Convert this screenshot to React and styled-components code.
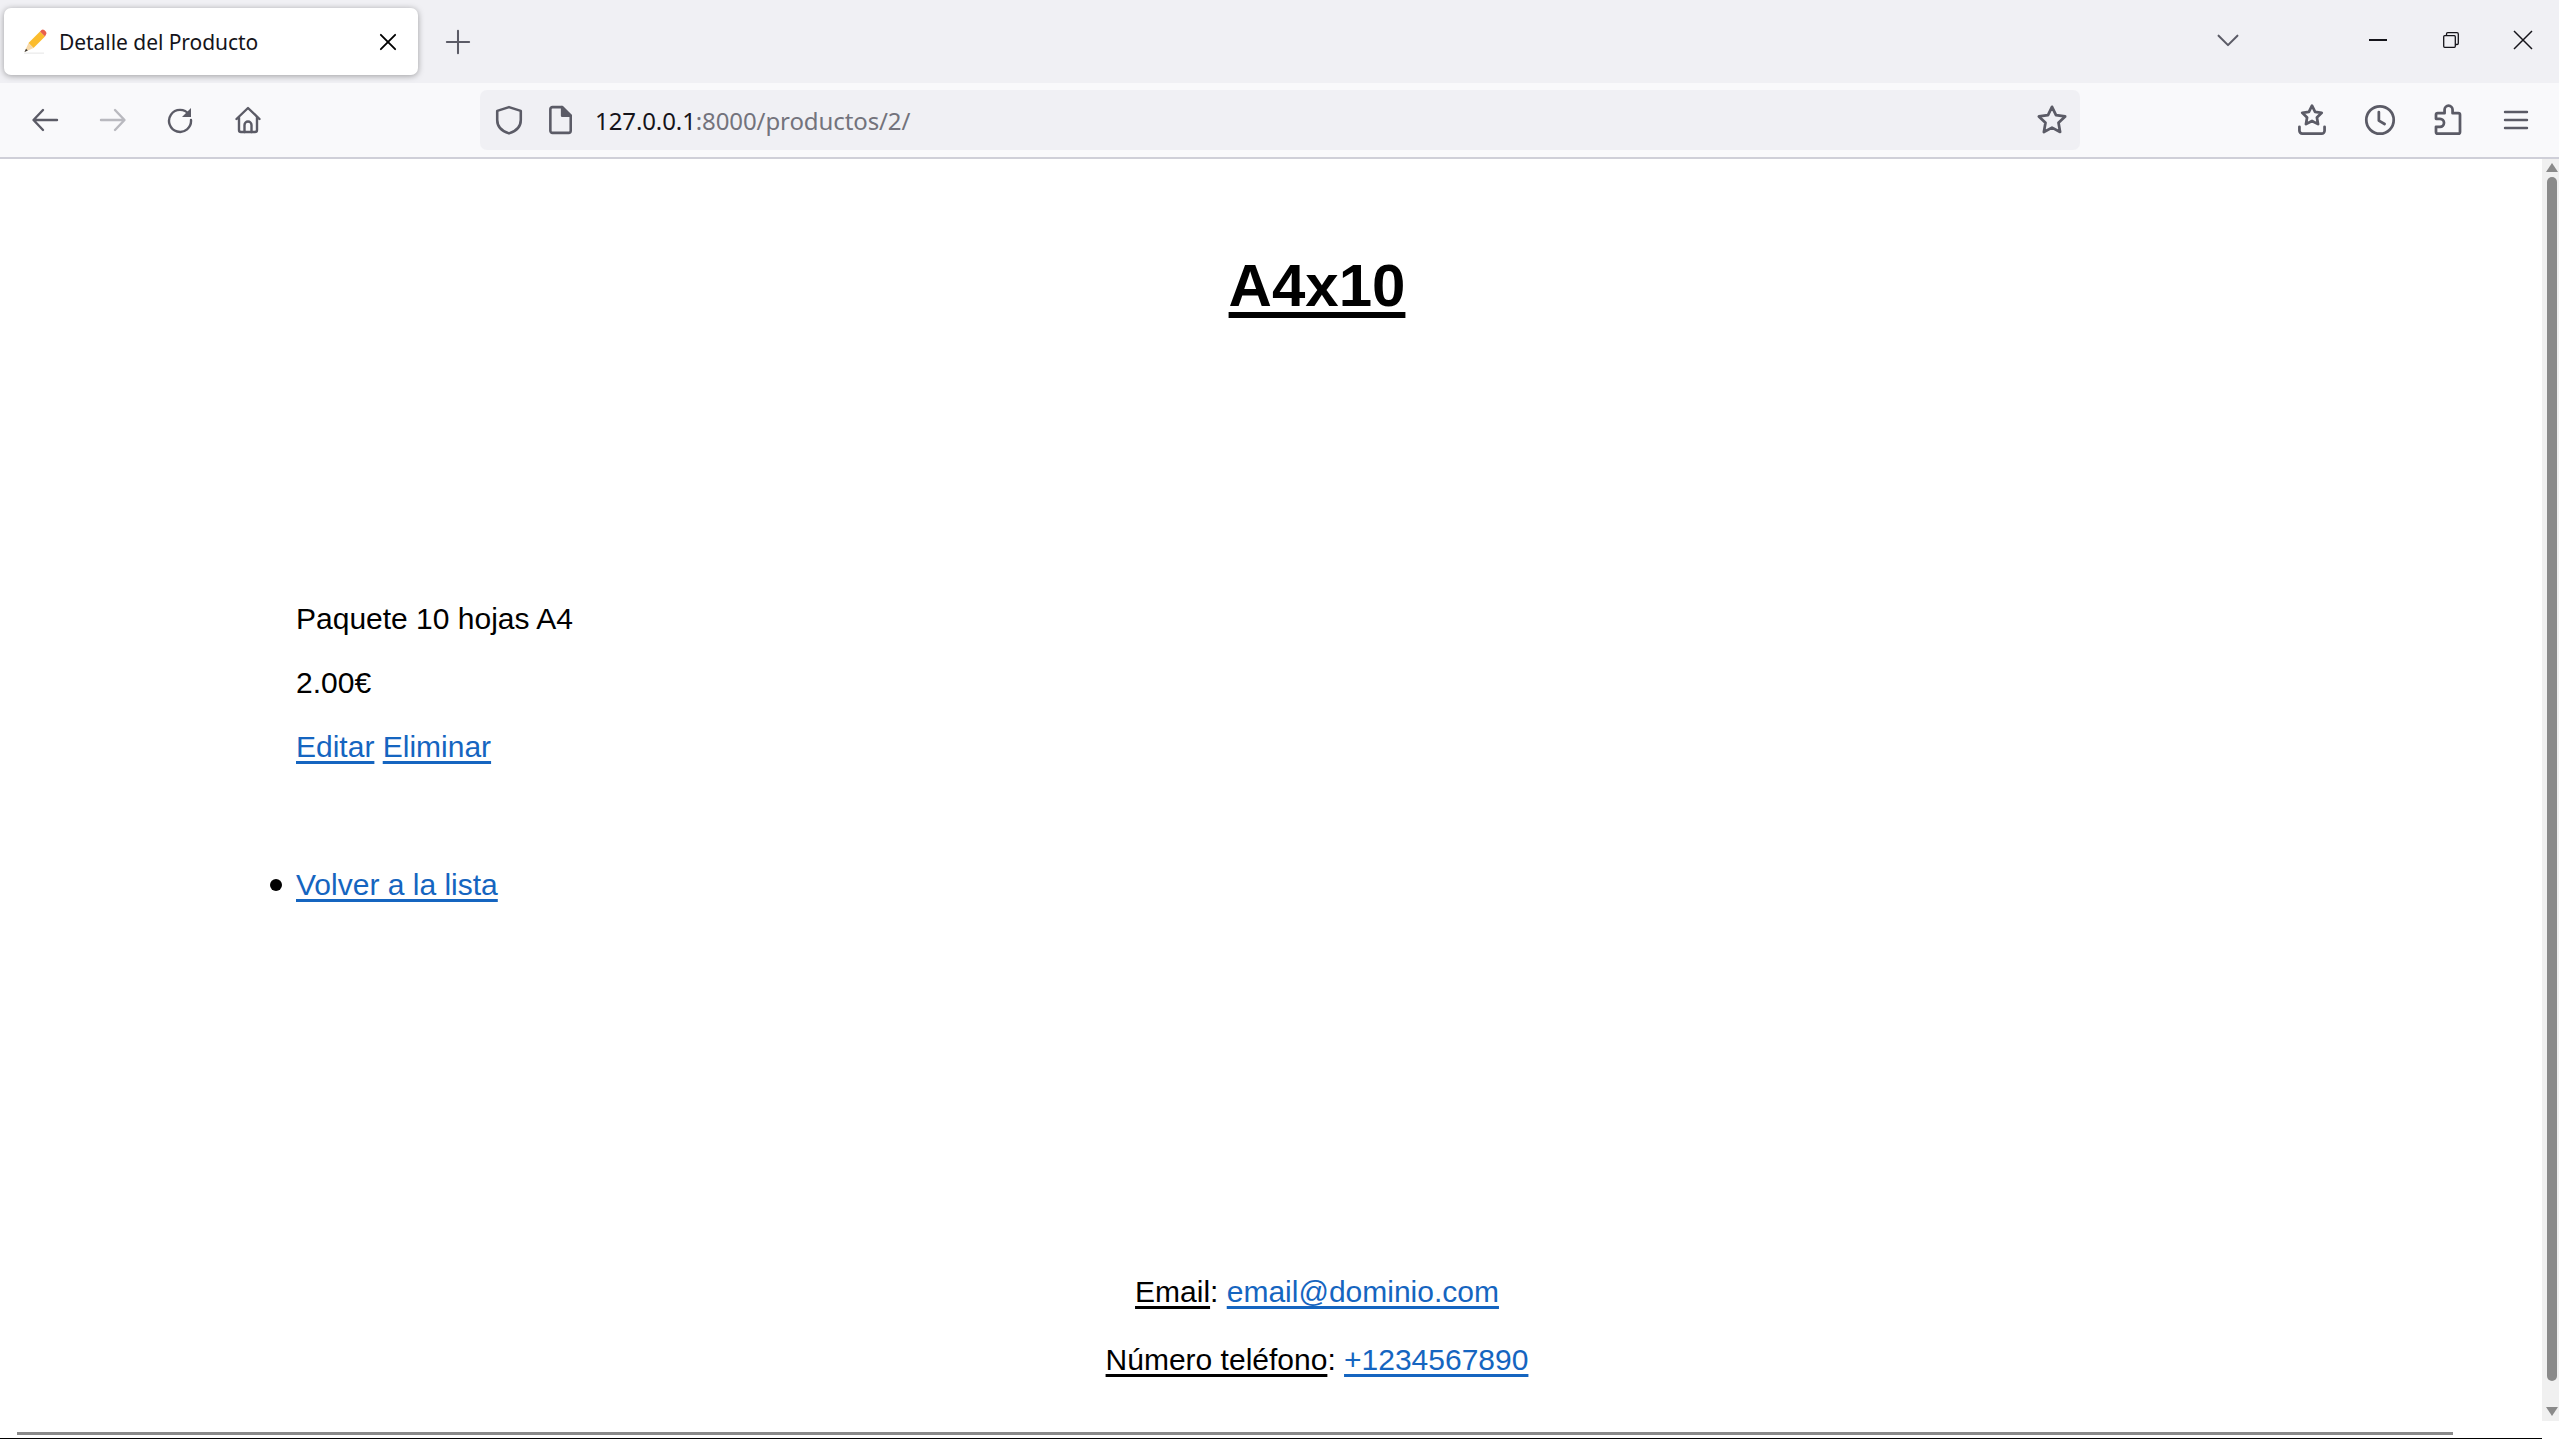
import styled, { createGlobalStyle } from 'styled-components';

const GlobalStyle = createGlobalStyle`
  html, body {
    margin: 0;
    padding: 0;
    height: 100%;
    overflow: hidden;
    background: #fff;
  }
`;

const Window = styled.div`
  width: 2559px;
  height: 1439px;
  display: flex;
  flex-direction: column;
  overflow: hidden;
  background: #fff;
`;

// Browser chrome
const TabBar = styled.div`
  height: 83px;
  flex: none;
  box-sizing: border-box;
  background: #f0f0f4;
  display: flex;
  align-items: flex-start;
  padding: 8px 0 0 4px;
`;

const Tab = styled.div`
  width: 414px;
  height: 67px;
  box-sizing: border-box;
  background: #fff;
  border-radius: 7px;
  box-shadow: 0 1px 6px rgba(0, 0, 0, 0.35);
  display: flex;
  align-items: center;
  padding: 0 20px 0 19px;
`;

const TabTitle = styled.span`
  flex: 1;
  margin-left: 12px;
  font-family: 'Noto Sans', sans-serif;
  font-size: 21px;
  letter-spacing: -0.05px;
  color: #15141a;
  white-space: nowrap;
`;

const NewTab = styled.div`
  margin: 21px 0 0 27px;
  width: 26px;
  height: 26px;
  color: #5b5b66;
`;

const TabSpacer = styled.div`
  flex: 1;
`;

const WindowControls = styled.div`
  display: flex;
  align-items: center;
  height: 63px;
  color: #15141a;
`;

const ControlSlot = styled.div`
  width: ${(p) => p.$w}px;
  flex: none;
  display: flex;
  justify-content: center;
  color: ${(p) => p.$color || '#15141a'};
`;

const Toolbar = styled.div`
  height: 76px;
  flex: none;
  box-sizing: border-box;
  background: #f9f9fb;
  border-bottom: 2px solid #cfcfd8;
  display: flex;
  align-items: center;
  padding: 0 0 1px 0;
`;

const NavGroup = styled.div`
  width: 480px;
  flex: none;
  display: flex;
  align-items: center;
  padding-left: 27px;
  box-sizing: border-box;
  gap: 31.5px;
`;

const ToolIcon = styled.div`
  width: 36px;
  height: 36px;
  display: flex;
  align-items: center;
  justify-content: center;
  color: ${(p) => (p.$dim ? '#b9b9bf' : '#5b5b66')};
`;

const UrlBar = styled.div`
  width: 1600px;
  height: 60px;
  flex: none;
  box-sizing: border-box;
  background: #f0f0f4;
  border-radius: 7px;
  display: flex;
  align-items: center;
  gap: 21px;
  padding: 0 12px 0 14px;
  color: #5b5b66;
`;

const UrlText = styled.div`
  flex: 1;
  margin: 2px 0 0 -1px;
  font-family: 'Noto Sans', sans-serif;
  font-size: 24px;
  letter-spacing: -0.1px;
  color: #73737c;
  white-space: nowrap;
`;

const UrlHost = styled.span`
  color: #15141a;
`;

const ActionGroup = styled.div`
  flex: 1;
  display: flex;
  align-items: center;
  justify-content: flex-end;
  gap: 32px;
  padding-right: 25px;
`;

// Page
const Viewport = styled.div`
  flex: 1;
  min-height: 0;
  display: flex;
`;

const Page = styled.main`
  flex: 1;
  min-width: 0;
  overflow: hidden;
  display: flex;
  flex-direction: column;
  font-family: 'Liberation Sans', Arial, sans-serif;
  font-size: 30px;
  line-height: 37px;
  color: #000;
`;

// the page content is wider than the viewport, so centred text sits right of the visible middle
const Title = styled.h1`
  width: 2634px;
  flex: none;
  margin: 90px 0 0;
  text-align: center;
  font-size: 60px;
  line-height: 74px;
  font-weight: 700;
  text-decoration: underline;
  text-decoration-thickness: 6px;
  text-underline-offset: 6px;
`;

const Details = styled.section`
  margin: 277px 0 0;
  padding-left: 296px;
`;

const Line = styled.p`
  margin: 0 0 27px;
`;

const PageLink = styled.a`
  color: #1565c0;
  text-decoration: underline;
  text-decoration-thickness: 3px;
  text-underline-offset: 4px;
`;

const BackList = styled.ul`
  margin: 74px 0 0;
  padding: 0 0 0 296px;
  list-style: none;
`;

const BackItem = styled.li`
  position: relative;

  &::before {
    content: '';
    position: absolute;
    left: -26px;
    top: 13px;
    width: 12px;
    height: 12px;
    border-radius: 50%;
    background: #000;
  }
`;

const Footer = styled.footer`
  width: 2634px;
  flex: none;
  margin-top: auto;
  padding-bottom: 54px;
  text-align: center;
`;

const FooterLine = styled.p`
  margin: 31px 0 0;
`;

const FooterLabel = styled.span`
  text-decoration: underline;
  text-decoration-thickness: 3px;
  text-underline-offset: 4px;
`;

const HScrollRow = styled.div`
  height: 6px;
  flex: none;
  padding-left: 17px;
`;

const HScrollThumb = styled.div`
  width: 2436px;
  height: 3px;
  background: #8a8a8a;
`;

const BottomEdge = styled.div`
  height: 1px;
  flex: none;
  background: #000;
`;

const VScroll = styled.aside`
  width: 17px;
  flex: none;
  height: 1262px;
  background: #f0f0f0;
  display: flex;
  flex-direction: column;
  align-items: center;
  color: #8a8a8a;
  padding: 4px 0 5px 3px;
  box-sizing: border-box;
`;

const VThumb = styled.div`
  flex: 1;
  width: 10px;
  margin: 5px 0 26px;
  border-radius: 5px;
  background: #8a8a8a;
`;

const Arrow = styled.svg`
  width: 12px;
  height: 9px;
  flex: none;
`;

// Icons
const Stroke = ({ size = 28, width = 2.4, children }) => (
  <svg
    width={size}
    height={size}
    viewBox="0 0 28 28"
    fill="none"
    stroke="currentColor"
    strokeWidth={width}
    strokeLinecap="round"
    strokeLinejoin="round"
    style={{ flex: 'none' }}
  >
    {children}
  </svg>
);

const Pencil = () => (
  <svg width="24" height="26" viewBox="0 0 24 26">
    <rect x="1" y="23.500" width="20" height="1.300" fill="#ececec" />
    <path d="M5.500 14 L17 2.500 L22 7.500 L10.500 19 Z" fill="#fbbc2d" />
    <path d="M5.500 14 L1.500 23 L10.500 19 Z" fill="#f7d9a8" />
    <path d="M1.500 23 L3 19.700 L4.800 21.500 Z" fill="#333" />
    <path d="M17 2.500 L18.500 1 Q19.800 0 21.200 1 L23 2.800 Q24 4.200 23 5.500 L22 7.500 Z" fill="#e8604c" />
  </svg>
);

export default function App() {
  return (
    <Window>
      <GlobalStyle />
      <TabBar>
        <Tab>
          <Pencil />
          <TabTitle>Detalle del Producto</TabTitle>
          <Stroke size={20} width={2.6}>
            <path d="M4 4l20 20M24 4L4 24" />
          </Stroke>
        </Tab>
        <NewTab>
          <Stroke size={26} width={2.2}>
            <path d="M14 2v24M2 14h24" />
          </Stroke>
        </NewTab>
        <TabSpacer />
        <WindowControls>
          <ControlSlot $w={70} $color="#5b5b66">
            <Stroke size={24} width={2.4}>
              <path d="M3 9l11 11L25 9" />
            </Stroke>
          </ControlSlot>
          <ControlSlot $w={79} />
          <ControlSlot $w={72}>
            <svg width="18" height="2" viewBox="0 0 18 2"><rect width="18" height="2" fill="currentColor" /></svg>
          </ControlSlot>
          <ControlSlot $w={73}>
            <svg width="16" height="16" viewBox="0 0 16 16" fill="none" stroke="currentColor" strokeWidth="1.3">
              <rect x=".7" y="3.700" width="11.600" height="11.600" rx="1" />
              <path d="M3.500 3.500V2a1.300 1.300 0 0 1 1.300-1.300h9.200A1.300 1.300 0 0 1 15.300 2v9.200a1.300 1.300 0 0 1-1.300 1.300h-1.500" />
            </svg>
          </ControlSlot>
          <ControlSlot $w={72}>
            <svg width="20" height="20" viewBox="0 0 20 20" fill="none" stroke="currentColor" strokeWidth="1.5">
              <path d="M1 1l18 18M19 1L1 19" />
            </svg>
          </ControlSlot>
        </WindowControls>
      </TabBar>
      <Toolbar>
        <NavGroup>
          <ToolIcon>
            <Stroke>
              <path d="M26 14H3M12 4L2.500 14 12 24" />
            </Stroke>
          </ToolIcon>
          <ToolIcon $dim>
            <Stroke>
              <path d="M2 14h23M16 4l9.500 10L16 24" />
            </Stroke>
          </ToolIcon>
          <ToolIcon>
            <Stroke>
              <path d="M23 8.500A11 11 0 1 0 25 14" />
              <path d="M25 2v9h-9z" fill="currentColor" stroke="none" />
            </Stroke>
          </ToolIcon>
          <ToolIcon>
            <Stroke>
              <path d="M2.500 13L14 2l11.500 11M5 11v13a2 2 0 0 0 2 2h14a2 2 0 0 0 2-2V11" />
              <path d="M10.500 26v-7a3.500 3.500 0 0 1 7 0v7" />
            </Stroke>
          </ToolIcon>
        </NavGroup>
        <UrlBar>
          <Stroke size={30}>
            <path d="M14 2l11 3.500V14c0 6-4.500 10.500-11 12.500C7.500 24.500 3 20 3 14V5.500z" />
          </Stroke>
          <Stroke size={30}>
            <path d="M5 4a2 2 0 0 1 2-2h9l8 8v14a2 2 0 0 1-2 2H7a2 2 0 0 1-2-2z" />
            <path d="M16 2l8 8h-8z" fill="currentColor" />
          </Stroke>
          <UrlText>
            <UrlHost>127.0.0.1</UrlHost>:8000/productos/2/
          </UrlText>
          <Stroke size={32}>
            <path d="M14 2.500l3.500 7.300 8 1.100-5.800 5.600 1.400 8L14 20.700l-7.100 3.800 1.400-8-5.800-5.600 8-1.100z" />
          </Stroke>
        </UrlBar>
        <ActionGroup>
          <ToolIcon>
            <Stroke size={32}>
              <path d="M14 1.500l2.700 5.300 5.800.900-4.200 4.100 1 5.800-5.300-2.800-5.300 2.800 1-5.800-4.200-4.100 5.800-.900z" />
              <path d="M3 20v3.500a2.500 2.500 0 0 0 2.500 2.500h17a2.500 2.500 0 0 0 2.500-2.500V20" />
            </Stroke>
          </ToolIcon>
          <ToolIcon>
            <Stroke size={32}>
              <circle cx="14" cy="14" r="12" />
              <path d="M13 7v7.500l5 3" />
            </Stroke>
          </ToolIcon>
          <ToolIcon>
            <Stroke size={32}>
              <path d="M5 26h18a1.500 1.500 0 0 0 1.500-1.500V9.500A1.500 1.500 0 0 0 23 8h-5V5a3.500 3.500 0 0 0-7 0v3H5a1.500 1.500 0 0 0-1.500 1.500V13H7a3.500 3.500 0 0 1 0 7H3.500v4.500A1.500 1.500 0 0 0 5 26z" />
            </Stroke>
          </ToolIcon>
          <ToolIcon>
            <Stroke size={28}>
              <path d="M3 6h22M3 14h22M3 22h22" />
            </Stroke>
          </ToolIcon>
        </ActionGroup>
      </Toolbar>
      <Viewport>
        <Page>
          <Title>A4x10</Title>
          <Details>
            <Line>Paquete 10 hojas A4</Line>
            <Line>2.00€</Line>
            <Line>
              <PageLink href="#">Editar</PageLink> <PageLink href="#">Eliminar</PageLink>
            </Line>
          </Details>
          <BackList>
            <BackItem>
              <PageLink href="#">Volver a la lista</PageLink>
            </BackItem>
          </BackList>
          <Footer>
            <FooterLine>
              <FooterLabel>Email</FooterLabel>: <PageLink href="#">email@dominio.com</PageLink>
            </FooterLine>
            <FooterLine>
              <FooterLabel>Número teléfono</FooterLabel>: <PageLink href="#">+1234567890</PageLink>
            </FooterLine>
          </Footer>
          <HScrollRow>
            <HScrollThumb />
          </HScrollRow>
          <BottomEdge />
        </Page>
        <VScroll>
          <Arrow viewBox="0 0 12 9">
            <path d="M6 0L12 9H0z" fill="currentColor" />
          </Arrow>
          <VThumb />
          <Arrow viewBox="0 0 12 9">
            <path d="M0 0h12L6 9z" fill="currentColor" />
          </Arrow>
        </VScroll>
      </Viewport>
    </Window>
  );
}
